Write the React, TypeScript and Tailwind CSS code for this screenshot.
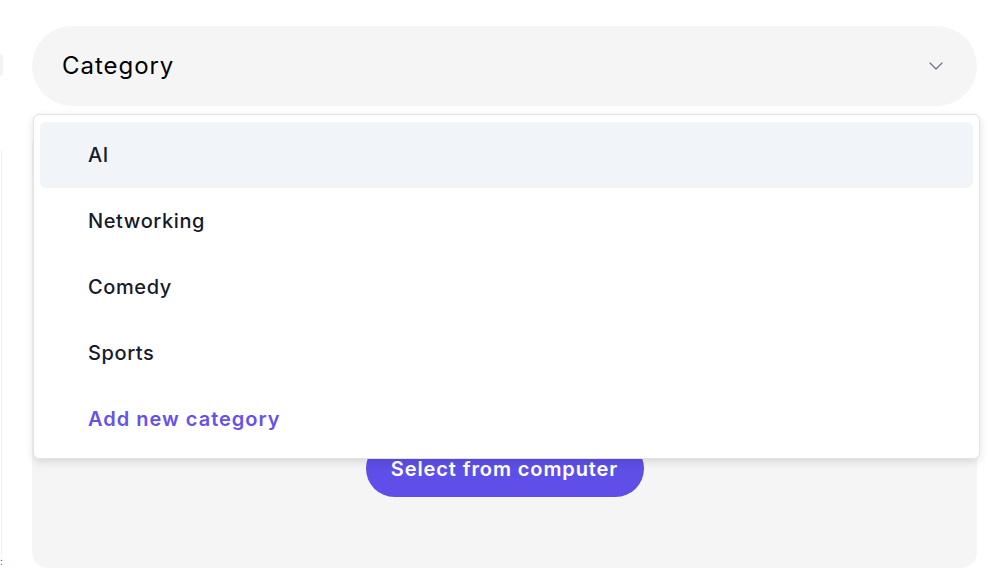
import React from "react";
import { ChevronDown } from "lucide-react";

const items = ["AI", "Networking", "Comedy", "Sports"];

export default function App() {
  return (
    <div
      className="w-[1008px] h-[588px] bg-white overflow-hidden flex"
      style={{ fontFamily: "Inter, 'Noto Sans', sans-serif" }}
    >
      <div className="w-[32px] flex flex-col">
        <div className="w-[3px] h-[22px] mt-[54px] rounded-r-full bg-[#f3f3f3]" />
        <div className="w-[2px] h-[405px] mt-[74px] border-r border-[#eeeeee] rounded-r" />
        <div className="text-[10px] leading-none text-gray-600 ml-[0px] mt-[1px]">:</div>
      </div>
      <div className="w-[945px] pt-[26px] flex flex-col relative">
        <div className="h-[80px] rounded-full bg-[#f5f5f5] pl-[30px] pr-[29px] flex items-center justify-between">
          <span className="text-[24px] tracking-[0.04em] text-black">Category</span>
          <ChevronDown size={24} strokeWidth={1.2} className="text-gray-500" />
        </div>
        <div className="mt-[24px] h-[438px] rounded-2xl bg-[#f5f5f5] flex flex-col items-center justify-end pb-[71px]">
          <button className="h-[57px] w-[278px] rounded-full bg-[#5e4fe8] text-white text-[20px] tracking-[0.045em] font-semibold">
            Select from computer
          </button>
        </div>
        <div className="absolute left-[1px] top-[114px] w-[947px] bg-white border border-[#e3e3e8] rounded-md shadow-[0_3px_8px_rgba(0,0,0,0.12)] p-[6px] pt-[7px]">
          {items.map((it, i) => (
            <div
              key={it}
              className={`h-[66px] px-[48px] flex items-center rounded-md text-[20px] tracking-[0.03em] font-medium text-[#161b2b] ${i === 0 ? "bg-[#f1f4f9]" : ""}`}
            >
              {it}
            </div>
          ))}
          <div className="h-[66px] px-[48px] flex items-center text-[20px] tracking-[0.05em] font-semibold text-[#6652e9]">
            Add new category
          </div>
        </div>
      </div>
    </div>
  );
}
